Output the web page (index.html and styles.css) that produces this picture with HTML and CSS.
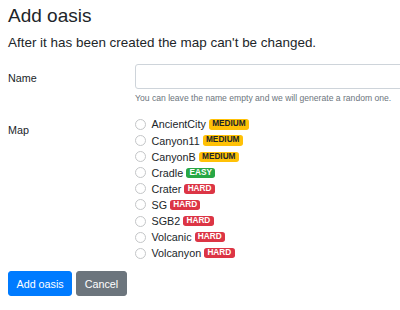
FILE: index.html
```html
<!DOCTYPE html>
<html>
<head>
<meta charset="utf-8">
<link rel="stylesheet" href="styles.css">
</head>
<body>
<div class="page">
  <h3 class="title">Add oasis</h3>
  <p class="lead">After it has been created the map can't be changed.</p>
  <form class="form">
    <div class="form-row">
      <label class="col-label" for="name">Name</label>
      <div class="field">
        <input class="input" id="name" type="text">
        <small class="help">You can leave the name empty and we will generate a random one.</small>
      </div>
    </div>
    <div class="form-row">
      <div class="col-label">Map</div>
      <div class="field">
        <label class="check"><span class="radio"></span>AncientCity <span class="badge medium">MEDIUM</span></label>
        <label class="check"><span class="radio"></span>Canyon11 <span class="badge medium">MEDIUM</span></label>
        <label class="check"><span class="radio"></span>CanyonB <span class="badge medium">MEDIUM</span></label>
        <label class="check"><span class="radio"></span>Cradle <span class="badge easy">EASY</span></label>
        <label class="check"><span class="radio"></span>Crater <span class="badge hard">HARD</span></label>
        <label class="check"><span class="radio"></span>SG <span class="badge hard">HARD</span></label>
        <label class="check"><span class="radio"></span>SGB2 <span class="badge hard">HARD</span></label>
        <label class="check"><span class="radio"></span>Volcanic <span class="badge hard">HARD</span></label>
        <label class="check"><span class="radio"></span>Volcanyon <span class="badge hard">HARD</span></label>
      </div>
    </div>
    <div class="buttons">
      <button type="button" class="btn primary">Add oasis</button>
      <button type="button" class="btn secondary">Cancel</button>
    </div>
  </form>
</div>
</body>
</html>
```
FILE: styles.css
```css
html, body {
  margin: 0;
  padding: 0;
  background: #fff;
  overflow: hidden;
}
body {
  font-family: "Liberation Sans", Arial, sans-serif;
  font-size: 10.75px;
  line-height: 1.5;
  color: #212529;
}
.page {
  padding: 4.6px 0 0 8px;
}
.title {
  margin: 0 0 5.5px;
  font-size: 19px;
  font-weight: 400;
  line-height: 1.2;
}
.lead {
  margin: 0 0 11px;
  font-size: 13.45px;
  line-height: 20.6px;
  font-weight: 300;
}
.form-row {
  display: grid;
  grid-template-columns: 127px 1fr;
  margin-bottom: 11px;
}
.col-label {
  padding-top: 5.1px;
  padding-bottom: 5.1px;
  line-height: 16.5px;
}
.field {
  display: flex;
  flex-direction: column;
}
.input {
  box-sizing: border-box;
  width: 270px;
  height: 25px;
  margin: 0;
  border: 1px solid #ced4da;
  border-radius: 3px;
  background: #fff;
  font: inherit;
  padding: 4px 8px;
}
.help {
  margin-top: 2.75px;
  font-size: 8.6px;
  line-height: 13.2px;
  color: #6c757d;
}
.check {
  display: flex;
  align-items: center;
  white-space: pre;
  height: 16.1px;
}
.radio {
  box-sizing: border-box;
  width: 11px;
  height: 11px;
  border-radius: 50%;
  border: 1px solid #c4c6c8;
  background: #fff;
  margin-right: 5.5px;
  flex: none;
}
.badge {
  display: inline-block;
  font-size: 8.25px;
  font-weight: 700;
  line-height: 1;
  padding: 1px 0.4em;
  border-radius: 2.75px;
}
.medium { background: #ffc107; color: #212529; }
.easy { background: #28a745; color: #fff; }
.hard { background: #dc3545; color: #fff; }
.buttons {
  display: flex;
  gap: 4px;
  margin-top: -1px;
}
.btn {
  font: inherit;
  line-height: 1.5;
  padding: 3.6px 7.5px;
  height: 25px;
  box-sizing: border-box;
  border: 1px solid transparent;
  border-radius: 3px;
  color: #fff;
}
.primary { background: #007bff; border-color: #007bff; }
.secondary { background: #6c757d; border-color: #6c757d; }
```
